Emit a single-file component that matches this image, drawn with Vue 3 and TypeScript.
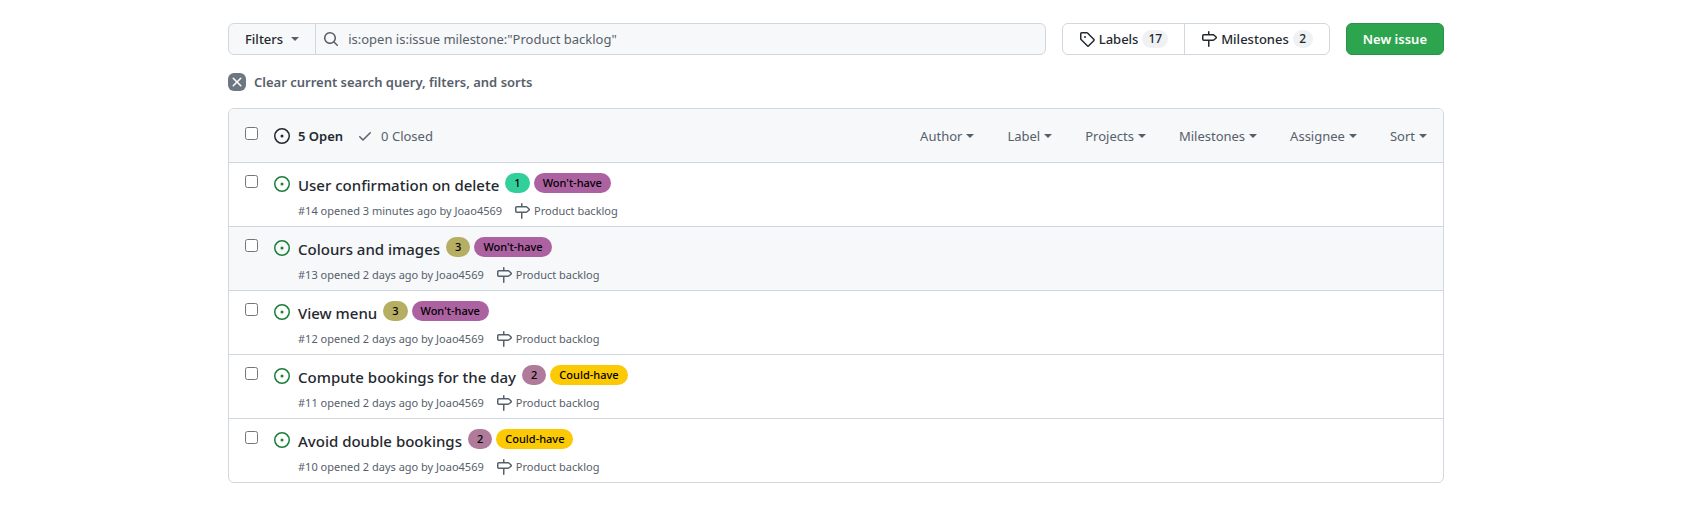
<script setup lang="ts">
import { ref } from 'vue'

interface Label {
  text: string
  tone: string
}

interface Issue {
  id: number
  title: string
  opened: string
  author: string
  milestone: string
  labels: Label[]
  active?: boolean
}

const icons = {
  issue:
    'M8 9.5a1.5 1.5 0 100-3 1.5 1.5 0 000 3zM8 0a8 8 0 100 16A8 8 0 008 0zM1.5 8a6.5 6.5 0 1113 0 6.5 6.5 0 01-13 0z',
  milestone:
    'M7.75 0a.75.75 0 01.75.75V3h3.634c.414 0 .814.147 1.13.414l2.07 1.75a1.75 1.75 0 010 2.672l-2.07 1.75a1.75 1.75 0 01-1.13.414H8.5v5.25a.75.75 0 11-1.5 0V10H2.75A1.75 1.75 0 011 8.25v-3.5C1 3.784 1.784 3 2.75 3H7V.75A.75.75 0 017.75 0zm0 8.5h4.384a.25.25 0 00.161-.06l2.07-1.75a.25.25 0 000-.38l-2.07-1.75a.25.25 0 00-.161-.06H2.75a.25.25 0 00-.25.25v3.5c0 .138.112.25.25.25h5z',
  search:
    'M11.5 7a4.499 4.499 0 11-8.998 0A4.499 4.499 0 0111.5 7zm-.82 4.74a6 6 0 111.06-1.06l3.04 3.04a.75.75 0 11-1.06 1.06l-3.04-3.04z',
  tag: 'M2.5 7.775V2.75a.25.25 0 01.25-.25h5.025a.25.25 0 01.177.073l6.25 6.25a.25.25 0 010 .354l-5.025 5.025a.25.25 0 01-.354 0l-6.25-6.25a.25.25 0 01-.073-.177zm-1.5 0V2.75C1 1.784 1.784 1 2.75 1h5.025c.464 0 .91.184 1.238.513l6.25 6.25a1.75 1.75 0 010 2.474l-5.026 5.026a1.75 1.75 0 01-2.474 0l-6.25-6.25A1.75 1.75 0 011 7.775zM6 5a1 1 0 100 2 1 1 0 000-2z',
  check:
    'M13.78 4.22a.75.75 0 010 1.06l-7.25 7.25a.75.75 0 01-1.06 0L2.22 9.28a.75.75 0 011.06-1.06L6 10.94l6.72-6.72a.75.75 0 011.06 0z',
  close:
    'M3.72 3.72a.75.75 0 011.06 0L8 6.94l3.22-3.22a.75.75 0 111.06 1.06L9.06 8l3.22 3.22a.75.75 0 11-1.06 1.06L8 9.06l-3.22 3.22a.75.75 0 01-1.06-1.06L6.94 8 3.72 4.78a.75.75 0 010-1.06z',
}

const query = ref('is:open is:issue milestone:"Product backlog"')
const menus = ['Author', 'Label', 'Projects', 'Milestones', 'Assignee', 'Sort']

const wont: Label = { text: "Won't-have", tone: 'purple' }
const could: Label = { text: 'Could-have', tone: 'yellow' }

const issues: Issue[] = [
  { id: 14, title: 'User confirmation on delete', opened: '3 minutes ago', author: 'Joao4569', milestone: 'Product backlog', labels: [{ text: '1', tone: 'green' }, wont] },
  { id: 13, title: 'Colours and images', opened: '2 days ago', author: 'Joao4569', milestone: 'Product backlog', labels: [{ text: '3', tone: 'olive' }, wont], active: true },
  { id: 12, title: 'View menu', opened: '2 days ago', author: 'Joao4569', milestone: 'Product backlog', labels: [{ text: '3', tone: 'olive' }, wont] },
  { id: 11, title: 'Compute bookings for the day', opened: '2 days ago', author: 'Joao4569', milestone: 'Product backlog', labels: [{ text: '2', tone: 'mauve' }, could] },
  { id: 10, title: 'Avoid double bookings', opened: '2 days ago', author: 'Joao4569', milestone: 'Product backlog', labels: [{ text: '2', tone: 'mauve' }, could] },
]
</script>

<template>
  <main class="page">
    <div class="toolbar">
      <form class="search" role="search" @submit.prevent>
        <button type="button" class="filters">Filters<span class="caret"></span></button>
        <label class="field">
          <svg class="icon" viewBox="0 0 16 16" aria-hidden="true"><path fill-rule="evenodd" :d="icons.search" /></svg>
          <input v-model="query" type="text" aria-label="Search all issues" />
        </label>
      </form>
      <nav class="subnav">
        <a href="#labels">
          <svg class="icon" viewBox="0 0 16 16" aria-hidden="true"><path fill-rule="evenodd" :d="icons.tag" /></svg>
          Labels<span class="counter">17</span>
        </a>
        <a href="#milestones">
          <svg class="icon" viewBox="0 0 16 16" aria-hidden="true"><path fill-rule="evenodd" :d="icons.milestone" /></svg>
          Milestones<span class="counter">2</span>
        </a>
      </nav>
      <button type="button" class="primary">New issue</button>
    </div>

    <a href="#clear" class="clear">
      <span class="clear-icon">
        <svg class="icon" viewBox="0 0 16 16" aria-hidden="true"><path fill-rule="evenodd" :d="icons.close" /></svg>
      </span>
      Clear current search query, filters, and sorts
    </a>

    <section class="box">
      <header class="head">
        <input type="checkbox" class="tick" aria-label="Select all issues" />
        <a href="#open" class="state current">
          <svg class="icon" viewBox="0 0 16 16" aria-hidden="true"><path fill-rule="evenodd" :d="icons.issue" /></svg>
          5 Open
        </a>
        <a href="#closed" class="state">
          <svg class="icon" viewBox="0 0 16 16" aria-hidden="true"><path fill-rule="evenodd" :d="icons.check" /></svg>
          0 Closed
        </a>
        <div class="menus">
          <button v-for="menu in menus" :key="menu" type="button">{{ menu }}<span class="caret"></span></button>
        </div>
      </header>

      <article v-for="issue in issues" :key="issue.id" class="row" :class="{ active: issue.active }">
        <input type="checkbox" class="tick" :aria-label="`Select issue ${issue.id}`" />
        <svg class="icon opened" viewBox="0 0 16 16" aria-hidden="true"><path fill-rule="evenodd" :d="icons.issue" /></svg>
        <div class="body">
          <div class="headline">
            <a :href="`#issue-${issue.id}`" class="title">{{ issue.title }}</a>
            <a v-for="label in issue.labels" :key="label.text" href="#label" class="label" :class="label.tone">{{ label.text }}</a>
          </div>
          <div class="meta">
            <span>#{{ issue.id }} opened {{ issue.opened }} by <a href="#author">{{ issue.author }}</a></span>
            <a href="#milestone" class="milestone">
              <svg class="icon" viewBox="0 0 16 16" aria-hidden="true"><path fill-rule="evenodd" :d="icons.milestone" /></svg>
              {{ issue.milestone }}
            </a>
          </div>
        </div>
      </article>
    </section>
  </main>
</template>

<style>
body {
  background: #ffffff;
}
</style>

<style scoped>
.page {
  padding: 23px 264px 32px 228px;
  font-family: 'Segoe UI', 'Noto Sans', 'Open Sans', sans-serif;
  font-size: 13px;
  line-height: 20px;
  color: #24292f;
}

.page * {
  box-sizing: border-box;
}

a {
  color: inherit;
  text-decoration: none;
}

button,
input {
  font: inherit;
  color: inherit;
  margin: 0;
}

.icon {
  width: 16px;
  height: 16px;
  flex: none;
  fill: currentColor;
}

.caret {
  display: inline-block;
  border: 4px solid transparent;
  border-top-color: currentColor;
  border-bottom-width: 0;
}

.toolbar {
  display: flex;
  gap: 16px;
}

.search {
  display: flex;
  flex: 1;
  height: 32px;
  border: 1px solid #d0d7de;
  border-radius: 6px;
  background: #f6f8fa;
  overflow: hidden;
}

.filters {
  display: flex;
  align-items: center;
  gap: 8px;
  padding: 0 16px;
  border: 0;
  border-right: 1px solid #d0d7de;
  background: transparent;
  font-weight: 500;
}

.filters .caret {
  color: #57606a;
}

.field {
  display: flex;
  flex: 1;
  align-items: center;
  gap: 9px;
  padding-left: 7px;
  color: #57606a;
}

.field input {
  flex: 1;
  min-width: 0;
  padding: 0;
  border: 0;
  outline: 0;
  background: transparent;
}

.subnav {
  display: flex;
  height: 32px;
  border: 1px solid #d0d7de;
  border-radius: 6px;
  font-weight: 500;
}

.subnav a {
  display: flex;
  align-items: center;
  gap: 4px;
  padding: 0 16px;
}

.subnav a + a {
  border-left: 1px solid #d0d7de;
}

.counter {
  min-width: 20px;
  padding: 0 6px;
  border-radius: 9px;
  background: #eff1f3;
  font-size: 12px;
  line-height: 18px;
  text-align: center;
}

.primary {
  height: 32px;
  padding: 0 16px;
  border: 1px solid #2a9147;
  border-radius: 6px;
  background: #2da44e;
  color: #ffffff;
  font-weight: 600;
}

.clear {
  display: flex;
  align-items: center;
  gap: 8px;
  width: fit-content;
  margin-top: 17px;
  color: #57606a;
  font-weight: 600;
}

.clear-icon {
  display: flex;
  align-items: center;
  justify-content: center;
  width: 18px;
  height: 18px;
  border-radius: 6px;
  background: #6e7781;
  color: #ffffff;
}

.box {
  margin-top: 16px;
  border: 1px solid #d0d7de;
  border-radius: 6px;
  overflow: hidden;
}

.head {
  display: flex;
  align-items: center;
  height: 53px;
  padding: 0 16px;
  background: #f6f8fa;
  color: #57606a;
}

.tick {
  flex: none;
  width: 13px;
  height: 13px;
  margin-right: 16px;
}

.head .tick {
  margin-bottom: 4px;
}

.state {
  display: flex;
  align-items: center;
  gap: 8px;
  margin-right: 14px;
}

.current {
  color: #24292f;
  font-weight: 600;
}

.menus {
  display: flex;
  gap: 33px;
  margin-left: auto;
}

.menus button {
  display: flex;
  align-items: center;
  gap: 4px;
  padding: 0;
  border: 0;
  background: transparent;
}

.row {
  display: flex;
  align-items: flex-start;
  height: 64px;
  padding: 0 16px;
  border-top: 1px solid #d0d7de;
}

.active {
  background: #f6f8fa;
}

.row .tick {
  margin-top: 12px;
}

.opened {
  margin: 13px 8px 0 0;
  color: #1a7f37;
}

.body {
  padding-top: 10px;
}

.headline {
  display: flex;
  gap: 4px;
  height: 24px;
}

.title {
  margin-right: 2px;
  font-size: 15px;
  line-height: 24px;
  font-weight: 500;
}

.label {
  height: 20px;
  padding: 0 9px;
  border-radius: 10px;
  color: #000000;
  font-size: 11px;
  line-height: 20px;
  font-weight: 500;
}

.green {
  background: #33cf9a;
}

.purple {
  background: #ac61a1;
}

.olive {
  background: #b5ae63;
}

.mauve {
  background: #b07a9b;
}

.yellow {
  background: #fbca04;
}

.meta {
  display: flex;
  gap: 12px;
  margin-top: 4px;
  color: #57606a;
  font-size: 11px;
}

.milestone {
  display: flex;
  align-items: center;
  gap: 4px;
}
</style>
